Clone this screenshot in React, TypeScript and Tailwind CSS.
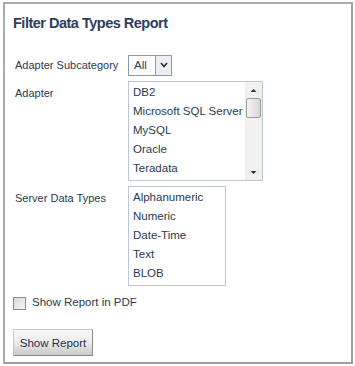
import React, { useState } from 'react'

const adapters = ['DB2', 'Microsoft SQL Server', 'MySQL', 'Oracle', 'Teradata']
const dataTypes = ['Alphanumeric', 'Numeric', 'Date-Time', 'Text', 'BLOB']

const font = { fontFamily: '"Liberation Sans", Arial, sans-serif' }

export default function App() {
  const [pdf, setPdf] = useState(false)

  return (
    <div className="w-[355px] h-[366px] bg-white pt-[2px] pl-[3px]" style={font}>
      <div className="w-[350px] h-[362px] border-2 border-[#a8acb0] border-r-[#9aa0a6] border-b-[#9aa0a6] pl-[8px] pt-[9px]">
        {/* Title */}
        <h1 className="text-[14.5px] font-bold text-[#2c4060] leading-[20px] tracking-[-0.5px]">
          Filter Data Types Report
        </h1>

        <div className="mt-[21px] text-[11px] text-[#2a3a50]">
          {/* Subcategory */}
          <div className="flex items-center h-[22px]">
            <span className="w-[115px] pl-[2px] whitespace-nowrap">Adapter Subcategory</span>
            <div className="flex h-[21px] w-[44px] border border-[#8d98b8] bg-white">
              <span className="flex-1 pl-[5px] leading-[19px] text-[11.5px]">All</span>
              <div className="w-[16px] border-l border-[#8d98b8] bg-[#eceef2] flex items-center justify-center">
                <svg width="8" height="6" viewBox="0 0 8 6">
                  <path d="M1 1 L4 4.5 L7 1" stroke="#1f2f4a" strokeWidth="1.6" fill="none" />
                </svg>
              </div>
            </div>
          </div>

          {/* Adapter */}
          <div className="flex mt-[5px]">
            <span className="w-[115px] pl-[2px] pt-[4px]">Adapter</span>
            <div className="flex h-[100px] w-[135px] border border-[#bcc6d6] bg-white text-[11.5px]">
              <div className="flex-1 pl-[4px] pt-[1px]">
                {adapters.map(a => (
                  <div key={a} className="h-[19px] leading-[19px] whitespace-nowrap">{a}</div>
                ))}
              </div>
              <div className="w-[17px] bg-[#f0f0f0] flex flex-col items-center">
                <svg width="17" height="16" viewBox="0 0 17 16" className="shrink-0">
                  <path d="M5.5 10 L8.5 7 L11.5 10 Z" fill="#333" />
                </svg>
                <div className="w-[15px] h-[20px] border border-[#9a9a9a] rounded-[2px] bg-gradient-to-r from-[#f4f4f4] to-[#d8d8d8]" />
                <div className="flex-1" />
                <svg width="17" height="16" viewBox="0 0 17 16" className="shrink-0">
                  <path d="M5.5 7 L8.5 10 L11.5 7 Z" fill="#333" />
                </svg>
              </div>
            </div>
          </div>

          {/* Server data types */}
          <div className="flex mt-[5px]">
            <span className="w-[115px] pl-[2px] pt-[4px]">Server Data Types</span>
            <div className="h-[100px] w-[98px] border border-[#bcc6d6] bg-white pl-[4px] pt-[1px] text-[11.5px]">
              {dataTypes.map(t => (
                <div key={t} className="h-[19px] leading-[19px] whitespace-nowrap">{t}</div>
              ))}
            </div>
          </div>

          {/* PDF checkbox */}
          <label className="flex items-center mt-[10px] h-[14px] gap-[6px]">
            <span
              onClick={() => setPdf(p => !p)}
              className="w-[13px] h-[13px] border border-[#8c8c8c] bg-gradient-to-br from-[#d8d8d8] to-[#f6f6f6] flex items-center justify-center"
            >
              {pdf && <span className="text-[9px] leading-none">✓</span>}
            </span>
            <span className="text-[11.5px]">Show Report in PDF</span>
          </label>

          {/* Button */}
          <button className="mt-[19px] w-[80px] h-[27px] pt-[2px] border border-[#c8c8c8] border-b-[#8a8a8a] border-r-[#8a8a8a] bg-gradient-to-b from-[#f8f8f8] via-[#ececec] to-[#c9c9c9] text-[11.5px] text-[#1f3050]">
            Show Report
          </button>
        </div>
      </div>
    </div>
  )
}
